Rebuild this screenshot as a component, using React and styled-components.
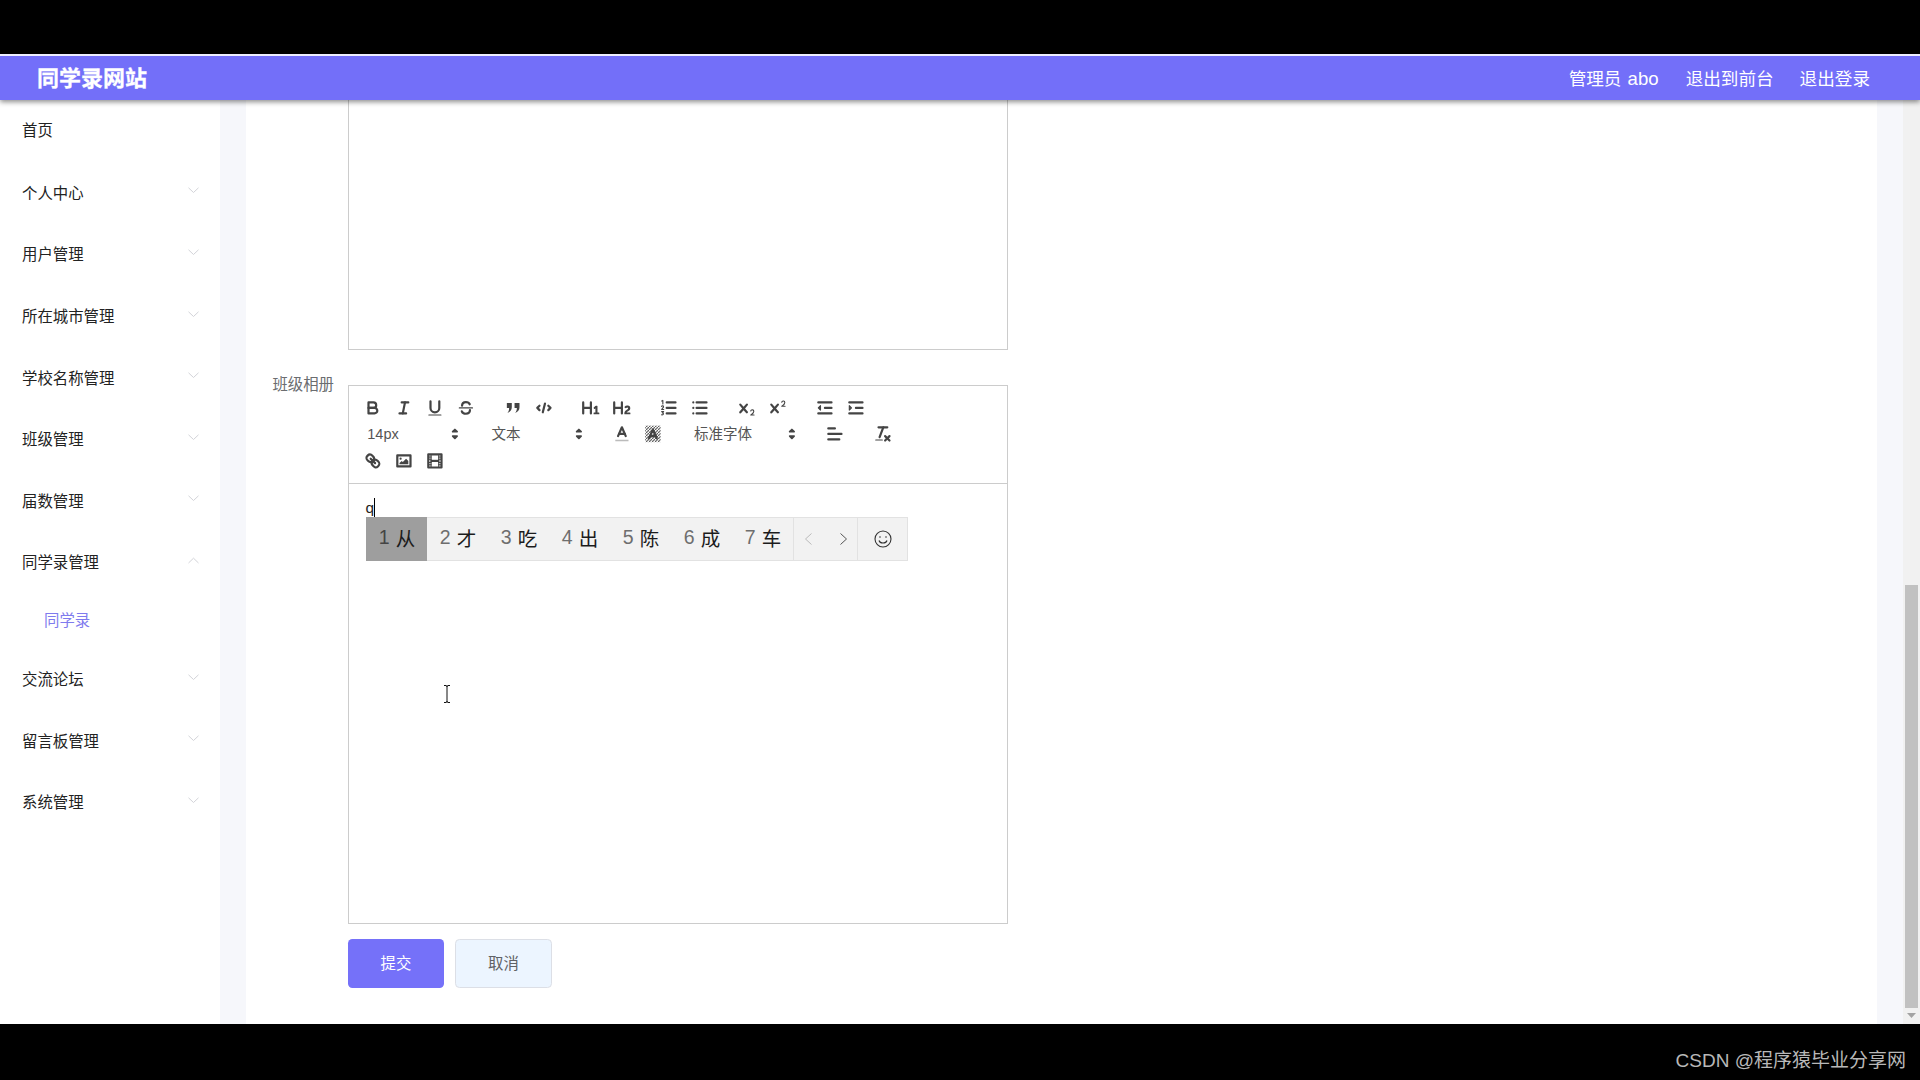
import React from 'react';
import styled, { createGlobalStyle } from 'styled-components';

const Global = createGlobalStyle`
  html, body { margin: 0; padding: 0; background: #000; overflow: hidden; }
  * { box-sizing: border-box; }
  body { font-family: "Liberation Sans", "Noto Sans CJK SC", sans-serif; }
`;

const Page = styled.div`width: 1920px; height: 1080px; display: flex; flex-direction: column; background: #000;`;
const TopBlack = styled.div`height: 54px; flex: none; background: #000;`;
const Window = styled.div`height: 970px; flex: none; display: flex; flex-direction: column; overflow: hidden; background: #f6f7fb;`;
const Header = styled.header`
  height: 46px; flex: none; display: flex; align-items: center; justify-content: space-between;
  padding: 0 50px 0 37px; background: #736ff9; border-top: 2px solid #eeeeff;
  box-shadow: 0 2px 5px rgba(0,0,0,.45); position: relative; z-index: 2; color: #fff;
`;
const Logo = styled.div`font-size: 22px; font-weight: 700; line-height: 44px; padding-top: 2px; -webkit-text-stroke: .3px #fff;`;
const HeaderLinks = styled.nav`display: flex; gap: 26px; font-size: 17.6px; line-height: 22px; padding-top: 1px;`;
const UserName = styled.span`font-size: 18.6px; margin-left: 1px;`;
const AdminLink = styled.span`margin-right: 1px;`;
const Body = styled.div`flex: 1; display: flex; min-height: 0;`;
const Sidebar = styled.aside`width: 220px; flex: none; background: #fff;`;
const MenuRow = styled.div`
  height: 61.6px; padding: 0 21px ${p => p.$first ? 3 : 1}px 22px; display: flex; align-items: center; justify-content: space-between;
  font-size: 15.4px; color: #222;
`;
const SubRow = styled.div`height: 55px; padding: 0 0 2px 44px; display: flex; align-items: center; font-size: 15.4px; color: #7f7bee;`;
const Chevron = styled.svg`width: 11px; height: 7px; margin: 0 0 2px; fill: none; stroke: #d2d3d8; stroke-width: 1;`;
const Main = styled.main`
  width: 1631px; flex: none; margin: 0 0 0 26px; background: #fff; padding-left: 102px;
  display: flex; flex-direction: column; position: relative;
`;
const TopBox = styled.div`width: 660px; height: 250px; flex: none; border: 1px solid #ccc; border-top: 0; margin-bottom: 35px;`;
const FieldLabel = styled.label`
  position: absolute; left: 0; top: 274px; width: 88px; text-align: right; font-size: 15.4px; line-height: 22px; color: #6b6d70;
`;
const Editor = styled.div`width: 660px; height: 539px; flex: none; border: 1px solid #ccc; display: flex; flex-direction: column; position: relative; margin-bottom: 15px;`;
const Toolbar = styled.div`height: 98px; flex: none; padding: 8.8px; border-bottom: 1px solid #ccc; display: flex; flex-direction: column;`;
const ToolRow = styled.div`height: 26.4px; display: flex; align-items: center;`;
const Group = styled.div`display: flex; margin-right: 16.5px;`;
const Btn = styled.span`
  width: 30.8px; height: 26.4px; display: flex; align-items: center; justify-content: center;
  svg { width: 19.8px; height: 19.8px; display: block; overflow: visible; }
  .s { fill: none; stroke: #444; stroke-width: 2; stroke-linecap: round; stroke-linejoin: round; }
  .t { fill: none; stroke: #444; stroke-width: 1; stroke-linecap: round; stroke-linejoin: round; }
  .f { fill: #444; }
`;
const Picker = styled.div`
  width: ${p => p.$w}px; height: 26.4px; margin-right: 16.5px; padding: 0 1px 0 9.5px; display: flex; align-items: center; justify-content: space-between;
  font-size: 14.52px; color: #555;
  span { margin-bottom: ${p => p.$cjk ? 3 : 0}px; }
  svg { width: 19.8px; height: 19.8px; fill: #444; stroke: #444; stroke-width: 1.6; stroke-linejoin: round; }
`;
const Content = styled.div`flex: 1; padding: 13.2px 16.5px; font-size: 15.4px; line-height: 22px; color: #222;`;
const Composition = styled.span`border-bottom: 1px dotted #222; border-right: 1px solid #000; display: inline-block; line-height: 20px;`;
const Ime = styled.div`
  position: absolute; left: 16.5px; top: 130.5px; width: 542px; height: 44px; display: flex;
  background: #f2f2f2; border: 1px solid #e2e2e2;
`;
const Candidate = styled.div`
  width: 61px; flex: none; margin-top: -1px; margin-bottom: -1px; padding: 0 0 2px 2px; display: flex; align-items: center; justify-content: center; gap: 6px;
  background: ${p => p.$on ? '#9e9e9e' : 'transparent'}; margin-left: ${p => p.$on ? '-1px' : '0'};
  font-size: 19.5px; color: #1c1c1c;
  i { font-style: normal; color: ${p => p.$on ? '#444' : '#6e6e6e'}; font-size: 19.5px; }
`;
const ImePager = styled.div`width: 65px; flex: none; border-left: 1px solid #e2e2e2; border-right: 1px solid #e2e2e2; display: flex; align-items: center; justify-content: space-between; padding: 0 9px 0 10px;`;
const ImeEmoji = styled.div`flex: 1; display: flex; align-items: center; justify-content: center; padding-left: 1px;`;
const IBeam = styled.svg`position: absolute; left: 93px; top: 298px; width: 10px; height: 20px; fill: none; stroke: #111; stroke-width: 1;`;
const Actions = styled.div`display: flex; gap: 11px;`;
const Primary = styled.button`
  width: 96px; height: 49px; border: 0; border-radius: 4.4px; background: #7571f9; color: #fff; font: inherit; font-size: 15.4px; padding: 0 0 3px;
`;
const Cancel = styled.button`
  width: 97px; height: 49px; border: 1px solid #dcdfe6; border-radius: 4.4px; background: #ecf5ff; color: #606266; font: inherit; font-size: 15.4px; padding: 0 0 3px;
`;
const Track = styled.div`width: 17px; flex: none; background: #f1f1f1; margin-left: auto; display: flex; flex-direction: column; align-items: center; position: relative;`;
const Thumb = styled.div`width: 13px; height: 423px; margin-top: 485px; background: #c1c1c1;`;
const TrackArrow = styled.svg`width: 9px; height: 5px; margin-top: 5px; fill: #a3a3a3;`;
const BottomBlack = styled.footer`
  height: 56px; flex: none; background: #000; display: flex; align-items: center; justify-content: flex-end; padding: 13px 14px 0 0;
  color: #b8b8b8; font-size: 19px;
`;

const Down = () => <Chevron viewBox="0 0 11 7"><polyline points="0.5,0.8 5.5,5.5 10.5,0.8" /></Chevron>;
const Up = () => <Chevron viewBox="0 0 11 7"><polyline points="0.5,6 5.5,1.2 10.5,6" /></Chevron>;

const X = 'M9.651,5.241a1,1,0,0,0-1.41.108L6,7.964,3.759,5.349a1,1,0,1,0-1.519,1.3L4.683,9.5,2.241,12.35a1,1,0,1,0,1.519,1.3L6,11.036,8.241,13.65a1,1,0,0,0,1.519-1.3L7.317,9.5,9.759,6.651A1,1,0,0,0,9.651,5.241Z';
const icons = {
  bold: <><path className="s" d="M5,4H9.5A2.5,2.5,0,0,1,12,6.5v0A2.5,2.5,0,0,1,9.5,9H5V4Z" /><path className="s" d="M5,9h5.5A2.5,2.5,0,0,1,13,11.5v0A2.5,2.5,0,0,1,10.5,14H5V9Z" /></>,
  italic: <><line className="s" x1="7" x2="13" y1="4" y2="4" /><line className="s" x1="5" x2="11" y1="14" y2="14" /><line className="s" x1="8" x2="10" y1="14" y2="4" /></>,
  underline: <><path className="s" d="M5,3V9a4.012,4.012,0,0,0,4,4H9a4.012,4.012,0,0,0,4-4V3" /><rect className="f" height="1" rx=".5" width="12" x="3" y="15" /></>,
  strike: <><line className="t" x1="3" x2="15" y1="9" y2="9" /><path className="s" d="M5.5,7C5.5,5 7,3.7 9,3.7c1.7,0 3,.7 3.5,2" /><path className="s" d="M12.7,11c0,2-1.6,3.3-3.7,3.3-1.8,0-3.2-.8-3.7-2.2" /></>,
  quote: <><path className="f" d="M3.5,4.5H8V8.5C8,11 6.5,12.8 4,13.6 5.1,12.2 5.6,10.8 5.6,9H3.5Z" /><path className="f" d="M10.5,4.5H15V8.5C15,11 13.5,12.8 11,13.6 12.1,12.2 12.6,10.8 12.6,9H10.5Z" /></>,
  code: <><polyline className="s" points="5 7 3 9 5 11" /><polyline className="s" points="13 7 15 9 13 11" /><line className="s" x1="10" x2="8" y1="5" y2="13" /></>,
  h1: <path className="f" d="M10,4V14a1,1,0,0,1-2,0V10H3v4a1,1,0,0,1-2,0V4A1,1,0,0,1,3,4V8H8V4a1,1,0,0,1,2,0Zm6.06787,9.209H14.98975V7.59863a.54085.54085,0,0,0-.605-.60547h-.62744a1.01119,1.01119,0,0,0-.748.29688L11.645,8.56641a.5435.5435,0,0,0-.022.8584l.28613.30762a.53861.53861,0,0,0,.84717.0332l.09912-.08789a1.2137,1.2137,0,0,0,.2417-.35254h.02246s-.01123.30859-.01123.60547V13.209H12.041a.54085.54085,0,0,0-.605.60547v.43945a.54085.54085,0,0,0,.605.60547h4.02686a.54085.54085,0,0,0,.605-.60547v-.43945A.54085.54085,0,0,0,16.06787,13.209Z" />,
  h2: <path className="f" d="M16.73975,13.81445v.43945a.54085.54085,0,0,1-.605.60547H11.855a.58392.58392,0,0,1-.64893-.60547V14.0127c0-2.90527,3.39941-3.42187,3.39941-4.55469a.77675.77675,0,0,0-.84717-.78125,1.17684,1.17684,0,0,0-.83594.38477c-.2749.26367-.561.374-.85791.13184l-.4292-.34082c-.30811-.24219-.38525-.51758-.1543-.81445a2.97155,2.97155,0,0,1,2.45361-1.17676,2.45393,2.45393,0,0,1,2.68408,2.40918c0,2.45312-3.1792,2.92676-3.27832,3.93848h2.79443A.54085.54085,0,0,1,16.73975,13.81445ZM9,3A.99974.99974,0,0,0,8,4V8H3V4A1,1,0,0,0,1,4V14a1,1,0,0,0,2,0V10H8v4a1,1,0,0,0,2,0V4A.99974.99974,0,0,0,9,3Z" />,
  ol: <><line className="s" x1="7" x2="15" y1="4" y2="4" /><line className="s" x1="7" x2="15" y1="9" y2="9" /><line className="s" x1="7" x2="15" y1="14" y2="14" /><path className="t" d="M2.5,2.8 L3.5,2.2 V5.5" /><path className="t" d="M2.3,7.6 C2.8,6.8 4.3,7 4.1,8.1 C4,8.8 2.6,9.5 2.4,10.4 H4.3" /><path className="t" d="M2.4,12.4 H4.2 L3.1,13.7 C4.4,13.6 4.6,15.6 2.3,15.3" /></>,
  ul: <><line className="s" x1="6" x2="15" y1="4" y2="4" /><line className="s" x1="6" x2="15" y1="9" y2="9" /><line className="s" x1="6" x2="15" y1="14" y2="14" /><line className="s" x1="3" x2="3" y1="4" y2="4" /><line className="s" x1="3" x2="3" y1="9" y2="9" /><line className="s" x1="3" x2="3" y1="14" y2="14" /></>,
  sub: <><path className="f" d="M15.5,15H13.861a3.858,3.858,0,0,0,1.914-2.975,1.8049,1.8049,0,0,0-1.6-1.751A1.921,1.921,0,0,0,12.021,11.7a0.50013,0.50013,0,1,0,.957.291h0a0.914,0.914,0,0,1,1.053-.725,0.81,0.81,0,0,1,.744.762c0,1.076-1.16971,1.86982-1.93971,2.43082A1.45639,1.45639,0,0,0,12,15.5a0.5,0.5,0,0,0,.5.5h3A0.5,0.5,0,0,0,15.5,15Z" /><path className="f" d={X} /></>,
  sup: <><path className="f" d="M15.5,7H13.861a4.015,4.015,0,0,0,1.914-2.975,1.8,1.8,0,0,0-1.6-1.751A1.922,1.922,0,0,0,12.021,3.7a0.5,0.5,0,1,0,.957.291,0.917,0.917,0,0,1,1.053-.725,0.81,0.81,0,0,1,.744.762c0,1.077-1.164,1.925-1.934,2.486A1.423,1.423,0,0,0,12,7.5a0.5,0.5,0,0,0,.5.5h3A0.5,0.5,0,0,0,15.5,7Z" /><path className="f" d={X} /></>,
  outdent: <><line className="s" x1="3" x2="15" y1="14" y2="14" /><line className="s" x1="3" x2="15" y1="4" y2="4" /><line className="s" x1="9" x2="15" y1="9" y2="9" /><polygon className="f" points="5 7 5 11 3 9 5 7" /><polygon className="t" points="5 7 5 11 3 9 5 7" /></>,
  indent: <><line className="s" x1="3" x2="15" y1="14" y2="14" /><line className="s" x1="3" x2="15" y1="4" y2="4" /><line className="s" x1="9" x2="15" y1="9" y2="9" /><polygon className="f" points="3 7 3 11 5 9 3 7" /><polygon className="t" points="3 7 3 11 5 9 3 7" /></>,
  color: <><line stroke="#bbb" strokeWidth="1.4" x1="3" x2="15" y1="15" y2="15" /><polyline className="s" points="5.5 11 9 3 12.5 11" /><line className="s" x1="11.63" x2="6.38" y1="9" y2="9" /></>,
  background: <><defs><pattern id="hatch" width="2.73" height="2.73" patternUnits="userSpaceOnUse"><path d="M0,2.73 L2.73,0" stroke="#444" strokeWidth=".9" /></pattern></defs><rect fill="url(#hatch)" x="2" y="1.5" width="14" height="15" /><polyline className="s" points="5.5 13 9 5 12.5 13" /><line className="s" x1="11.63" x2="6.38" y1="11" y2="11" /></>,
  align: <><line className="s" x1="3" x2="15" y1="9" y2="9" /><line className="s" x1="3" x2="13" y1="14" y2="14" /><line className="s" x1="3" x2="9" y1="4" y2="4" /></>,
  clean: <><line className="s" x1="5" x2="13" y1="3" y2="3" /><line className="s" x1="6" x2="9.35" y1="12" y2="3" /><line className="s" x1="11" x2="15" y1="11" y2="15" /><line className="s" x1="15" x2="11" y1="11" y2="15" /><rect className="f" height="1" rx=".5" width="7" x="2" y="14" /></>,
  link: <><line className="s" x1="7" x2="11" y1="7" y2="11" /><path className="s" d="M8.9,4.577a3.476,3.476,0,0,1,.36,4.679A3.476,3.476,0,0,1,4.577,8.9C3.185,7.5,2.035,6.4,4.217,4.217S7.5,3.185,8.9,4.577Z" /><path className="s" d="M13.423,9.1a3.476,3.476,0,0,0-4.679-.36,3.476,3.476,0,0,0,.36,4.679c1.392,1.392,2.5,2.542,4.679.36S14.815,10.5,13.423,9.1Z" /></>,
  image: <><rect className="s" height="10" width="12" x="3" y="4" /><circle className="f" cx="6" cy="7" r="1" /><polyline className="f" points="5 12 5 11 7 9 8 10 11 7 13 9 13 12 5 12" /></>,
  video: <><rect className="s" height="12" width="12" x="3" y="3" /><rect className="f" height="12" width="1" x="5" y="3" /><rect className="f" height="12" width="1" x="12" y="3" /><rect className="f" height="2" width="8" x="5" y="8" /><rect className="f" height="1" width="3" x="3" y="5" /><rect className="f" height="1" width="3" x="3" y="7" /><rect className="f" height="1" width="3" x="3" y="10" /><rect className="f" height="1" width="3" x="3" y="12" /><rect className="f" height="1" width="3" x="12" y="5" /><rect className="f" height="1" width="3" x="12" y="7" /><rect className="f" height="1" width="3" x="12" y="10" /><rect className="f" height="1" width="3" x="12" y="12" /></>,
};

const Tool = ({ name }) => <Btn><svg viewBox="0 0 18 18">{icons[name]}</svg></Btn>;
const Tools = ({ names }) => <Group>{names.map(n => <Tool key={n} name={n} />)}</Group>;
const Select = ({ w, cjk, children }) => (
  <Picker $w={w} $cjk={cjk}>
    <span>{children}</span>
    <svg viewBox="0 0 18 18"><polygon points="7 11 9 13 11 11 7 11" /><polygon points="7 7 9 5 11 7 7 7" /></svg>
  </Picker>
);

const menu = ['个人中心', '用户管理', '所在城市管理', '学校名称管理', '班级管理', '届数管理'];
const menuAfter = ['交流论坛', '留言板管理', '系统管理'];
const candidates = ['从', '才', '吃', '出', '陈', '成', '车'];

export default function App() {
  return (
    <Page>
      <Global />
      <TopBlack />
      <Window>
        <Header>
          <Logo>同学录网站</Logo>
          <HeaderLinks>
            <AdminLink>管理员<UserName> abo</UserName></AdminLink>
            <span>退出到前台</span>
            <span>退出登录</span>
          </HeaderLinks>
        </Header>
        <Body>
          <Sidebar>
            <MenuRow $first>首页</MenuRow>
            {menu.map(m => <MenuRow key={m}>{m}<Down /></MenuRow>)}
            <MenuRow>同学录管理<Up /></MenuRow>
            <SubRow>同学录</SubRow>
            {menuAfter.map(m => <MenuRow key={m}>{m}<Down /></MenuRow>)}
          </Sidebar>
          <Main>
            <TopBox />
            <FieldLabel>班级相册</FieldLabel>
            <Editor>
              <Toolbar>
                <ToolRow>
                  <Tools names={['bold', 'italic', 'underline', 'strike']} />
                  <Tools names={['quote', 'code']} />
                  <Tools names={['h1', 'h2']} />
                  <Tools names={['ol', 'ul']} />
                  <Tools names={['sub', 'sup']} />
                  <Tools names={['outdent', 'indent']} />
                </ToolRow>
                <ToolRow>
                  <Select w={107.8}>14px</Select>
                  <Select w={107.8} cjk>文本</Select>
                  <Tools names={['color', 'background']} />
                  <Select w={118.8} cjk>标准字体</Select>
                  <Tools names={['align']} />
                  <Tools names={['clean']} />
                </ToolRow>
                <ToolRow>
                  <Tools names={['link', 'image', 'video']} />
                </ToolRow>
              </Toolbar>
              <Content><Composition>q</Composition></Content>
              <Ime>
                {candidates.map((c, i) => (
                  <Candidate key={c} $on={i === 0}><i>{i + 1}</i>{c}</Candidate>
                ))}
                <ImePager>
                  <svg width="9" height="14" viewBox="0 0 9 14" fill="none" stroke="#bbb" strokeWidth="1"><polyline points="7.5,1.5 1.5,7 7.5,12.5" /></svg>
                  <svg width="9" height="14" viewBox="0 0 9 14" fill="none" stroke="#555" strokeWidth="1"><polyline points="1.5,1.5 7.5,7 1.5,12.5" /></svg>
                </ImePager>
                <ImeEmoji>
                  <svg width="18" height="18" viewBox="0 0 18 18" fill="none" stroke="#333" strokeWidth="1.1"><circle cx="9" cy="9" r="8" /><circle cx="6" cy="7" r=".8" fill="#333" stroke="none" /><circle cx="12" cy="7" r=".8" fill="#333" stroke="none" /><path d="M5,10.5c1,3.4 7,3.4 8,0" /></svg>
                </ImeEmoji>
              </Ime>
              <IBeam viewBox="0 0 10 20"><path d="M2,1.5 H4 Q5,1.5 5,3 V17 Q5,18.5 4,18.5 H2 M8,1.5 H6 Q5,1.5 5,3 M8,18.5 H6 Q5,18.5 5,17" /></IBeam>
            </Editor>
            <Actions>
              <Primary>提交</Primary>
              <Cancel>取消</Cancel>
            </Actions>
          </Main>
          <Track>
            <Thumb />
            <TrackArrow viewBox="0 0 9 5"><polygon points="0,0 9,0 4.5,5" /></TrackArrow>
          </Track>
        </Body>
      </Window>
      <BottomBlack>CSDN @程序猿毕业分享网</BottomBlack>
    </Page>
  );
}
